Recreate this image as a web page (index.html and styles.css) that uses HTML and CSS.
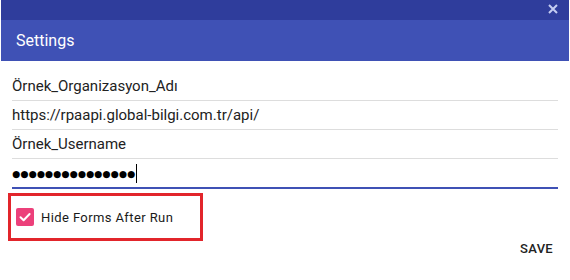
FILE: index.html
```html
<!DOCTYPE html>
<html lang="en">
<head>
  <meta charset="UTF-8">
  <meta name="viewport" content="width=device-width, initial-scale=1.0">
  <title>Settings</title>
  <link rel="stylesheet" href="styles.css">
</head>
<body>

<div class="dialog">
  <div class="top-bar">
    <svg class="close" width="10" height="10" viewBox="0 0 10 10">
      <path d="M1 1 L9 9 M9 1 L1 9" stroke="#c5cdf2" stroke-width="2"/>
    </svg>
  </div>
  <div class="title-bar">Settings</div>

  <div class="fields">
    <div class="field">Örnek_Organizasyon_Adı</div>
    <div class="field">https://rpaapi.global-bilgi.com.tr/api/</div>
    <div class="field">Örnek_Username</div>
    <div class="field active">
      <span class="dots">●●●●●●●●●●●●●●●</span><span class="caret"></span>
    </div>
  </div>

  <div class="option-box">
    <span class="checkbox">
      <svg width="18" height="18" viewBox="0 0 18 18">
        <path d="M4.5 9.2 L7.6 12.2 L13.6 6" fill="none" stroke="#fff" stroke-width="2" stroke-linecap="round" stroke-linejoin="round"/>
      </svg>
    </span>
    <span class="option-label">Hide Forms After Run</span>
  </div>

  <div class="actions">
    <button class="btn">SAVE</button>
  </div>
</div>

</body>
</html>
```

FILE: styles.css
```css
body {
  margin: 0;
  background-color: #fff;
  font-family: Roboto, "Liberation Sans", sans-serif;
}
.dialog {
  width: 568px;
  margin: 0 1px;
}
.top-bar {
  height: 20px;
  background-color: #2f3d9c;
  display: flex;
  justify-content: flex-end;
  align-items: center;
}
.close {
  margin-right: 11px;
  margin-bottom: 3px;
}
.title-bar {
  height: 41px;
  background-color: #3f51b5;
  color: #fff;
  font-size: 16px;
  display: flex;
  align-items: center;
  padding-left: 15px;
}
.fields {
  margin-top: 11px;
  padding: 0 11px 0 11px;
}
.field {
  height: 28px;
  border-bottom: 1px solid #ddd;
  font-size: 15px;
  color: #222;
  display: flex;
  align-items: center;
}
.field.active {
  height: 28px;
  border-bottom: 2px solid #3f51b5;
}
.dots {
  font-family: "DejaVu Sans", sans-serif;
  font-size: 9.3px;
  letter-spacing: 0.1px;
  color: #000;
}
.caret {
  display: inline-block;
  width: 1px;
  height: 19px;
  background-color: #000;
  margin-left: 1px;
}
.option-box {
  width: 184px;
  height: 42px;
  margin: 4px 0 0 7px;
  border: 3px solid #e2252b;
  display: flex;
  align-items: center;
  padding-left: 5px;
}
.checkbox {
  width: 18px;
  height: 18px;
  border-radius: 2px;
  background-color: #ec407a;
  display: flex;
}
.option-label {
  margin-left: 7px;
  font-size: 13px;
  font-weight: 400;
  letter-spacing: 0.4px;
  color: #1a1a1a;
}
.actions {
  display: flex;
  justify-content: flex-end;
  padding-right: 8px;
  margin-top: -3px;
}
.btn {
  background: none;
  border: none;
  font-family: Roboto, sans-serif;
  font-size: 13px;
  font-weight: 500;
  color: #222;
  letter-spacing: 0.3px;
  padding: 0 8px;
  height: 20px;
}
```
